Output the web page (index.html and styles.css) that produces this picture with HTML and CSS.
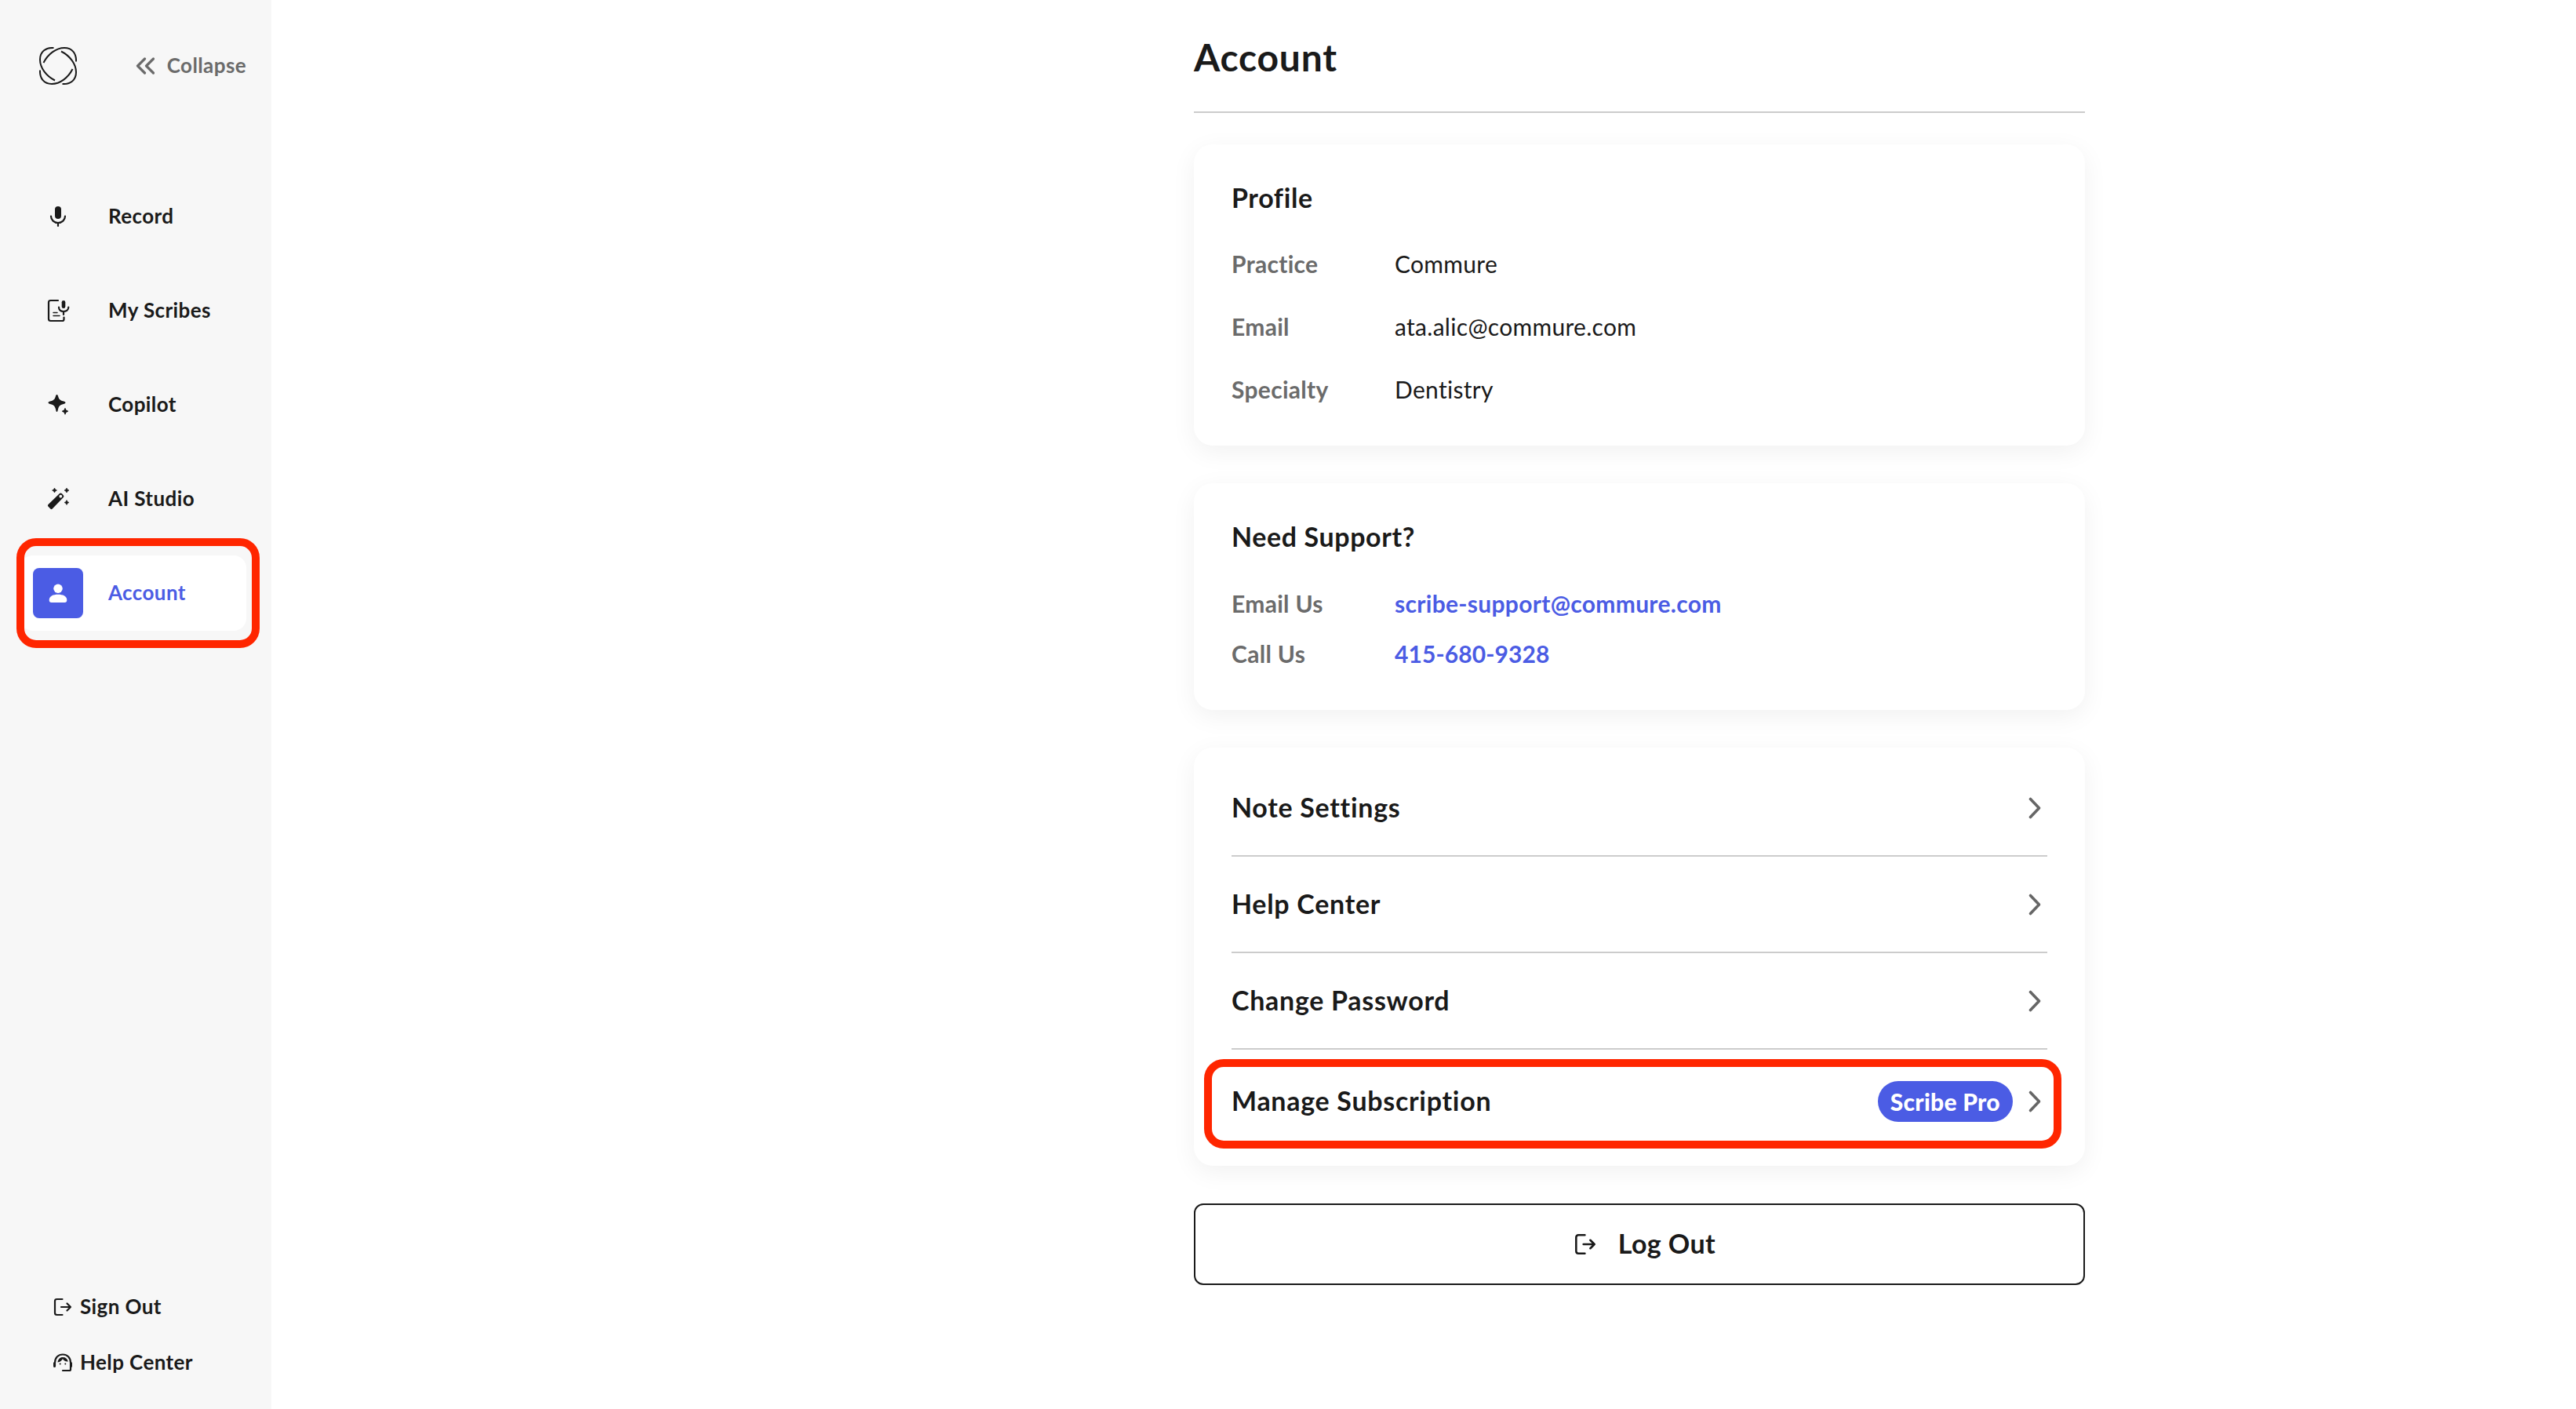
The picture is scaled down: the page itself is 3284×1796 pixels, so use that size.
FILE: index.html
```html
<!DOCTYPE html>
<html lang="en">
<head>
    <meta charset="UTF-8">
    <meta name="viewport" content="width=device-width, initial-scale=1.0">
    <title>Account</title>
    <link rel="stylesheet" href="styles.css">
</head>
<body>

    <aside class="sidebar">
        <div class="sidebar-top">
            <svg class="logo" viewBox="0 0 48 48">
                <path d="M18.500 1C8 .5 1 6 1 16c0 10.500 8 21 19 26.500"/>
                <path d="M18.500 1C8 .5 1 6 1 16c0 10.500 8 21 19 26.500" transform="rotate(90 24 24)"/>
                <path d="M18.500 1C8 .5 1 6 1 16c0 10.500 8 21 19 26.500" transform="rotate(180 24 24)"/>
                <path d="M18.500 1C8 .5 1 6 1 16c0 10.500 8 21 19 26.500" transform="rotate(270 24 24)"/>
            </svg>
            <button class="collapse">
                <svg viewBox="0 0 24 24"><path d="M11.500 3L2.500 12l9 9M22.500 3l-9 9 9 9"/></svg>
                <span>Collapse</span>
            </button>
        </div>

        <nav class="nav">
            <a class="nav-item" href="#">
                <span class="nav-icon">
                    <svg viewBox="0 0 32 32">
                        <rect x="12" y="3" width="8" height="16" rx="4" fill="currentColor"/>
                        <path class="line" d="M7 15.500c0 5 4 8.500 9 8.500s9-3.500 9-8.500M16 24v4"/>
                    </svg>
                </span>
                <span class="nav-label">Record</span>
            </a>
            <a class="nav-item" href="#">
                <span class="nav-icon">
                    <svg viewBox="0 0 32 32">
                        <path class="line" d="M16 3H6.500Q4 3 4 5.500v21Q4 29 6.500 29h15q2 0 2-2v-2.500"/>
                        <path class="line thin" d="M10 18.500h5M10 22.500h8"/>
                        <rect x="20.700" y="3" width="4.600" height="10" rx="2.300" fill="currentColor"/>
                        <path class="line" d="M17 11.500c0 3.500 2.500 5.500 6 5.500s6.300-2 6.300-5.500M23 17v4"/>
                    </svg>
                </span>
                <span class="nav-label">My Scribes</span>
            </a>
            <a class="nav-item" href="#">
                <span class="nav-icon">
                    <svg viewBox="0 0 32 32" fill="currentColor">
                        <path d="M14.500 3c1 0 1.300 1 1.600 2.200 1 3.500 2.400 5 5.900 6 1.600.4 3.500.8 3.500 2s-1.900 1.600-3.500 2c-3.500 1-4.900 2.500-5.900 6-.3 1.500-.8 3.800-1.600 3.800s-1.300-2.300-1.600-3.800c-1-3.500-2.400-5-5.900-6-1.600-.4-3.500-.8-3.500-2s1.900-1.600 3.500-2c3.500-1 4.900-2.500 5.900-6C13.200 4 13.500 3 14.500 3z"/>
                        <path d="M25 20c.8 0 1 2 1.400 2.500s2.600.8 2.600 1.700-2.200 1.200-2.600 1.700-.6 2.600-1.400 2.600-1-2.100-1.400-2.600-2.600-.8-2.600-1.700 2.200-1.200 2.600-1.700S24.200 20 25 20z"/>
                    </svg>
                </span>
                <span class="nav-label">Copilot</span>
            </a>
            <a class="nav-item" href="#">
                <span class="nav-icon">
                    <svg viewBox="0 0 32 32" fill="currentColor">
                        <path fill-rule="evenodd" d="M3.300 23.300L18 9q1.500-1 3 .3l2 2.200q1 1.300-.2 2.500L8.500 28.800q-1 .7-2 0l-3.300-3.500q-.7-1 .1-2zM19.300 10.700a1.900 1.900 0 1 0 .1 3.800 1.900 1.900 0 0 0-.1-3.800z"/>
                        <path d="M11.500 2q.7 2.500 3 3-2.300.6-3 3-.7-2.400-3-3 2.300-.5 3-3zM27 2q.7 2.500 3 3-2.300.6-3 3-.7-2.400-3-3 2.300-.5 3-3zM27 17.500q.7 2.500 3 3-2.300.6-3 3-.7-2.400-3-3 2.300-.5 3-3z" stroke="currentColor" stroke-width=".6"/>
                    </svg>
                </span>
                <span class="nav-label">AI Studio</span>
            </a>
            <a class="nav-item active" href="#">
                <span class="nav-icon">
                    <svg viewBox="0 0 32 32" fill="currentColor">
                        <circle cx="16" cy="10.300" r="5.700"/>
                        <path d="M4.700 25c0-5 4.500-7.300 11.300-7.300S27.300 20 27.300 25q0 3-3 3H7.700q-3 0-3-3z"/>
                    </svg>
                </span>
                <span class="nav-label">Account</span>
            </a>
        </nav>

        <div class="sidebar-bottom">
            <a class="bottom-link" href="#">
                <svg viewBox="0 0 24 24">
                    <path d="M11.500 2H4.500Q2 2 2 4.500v15Q2 22 4.500 22h7M10 12h12M17.500 7.500L22 12l-4.500 4.500"/>
                </svg>
                <span>Sign Out</span>
            </a>
            <a class="bottom-link" href="#">
                <svg viewBox="0 0 24 24">
                    <path d="M2 16v-4C2 5.500 6.500 1.500 12 1.500s10 4 10 10.500v8.500q0 1.500-1.500 1.500H12"/>
                    <path class="ear" d="M1.500 12.500v4M22.500 12.500v4"/>
                    <path class="hair" d="M5.500 11.500C6 7.500 8.500 5 12 5s6 2 6.800 5.500c-3 .5-5.600-1-6.800-3.500-1 2.300-3.500 4-6.500 4.500z"/>
                    <circle class="dot" cx="8.700" cy="13.500" r="1"/>
                    <circle class="dot" cx="15.300" cy="13.500" r="1"/>
                </svg>
                <span>Help Center</span>
            </a>
        </div>
    </aside>

    <main class="content">
        <h1>Account</h1>

        <section class="card profile">
            <h2>Profile</h2>
            <dl>
                <dt>Practice</dt>
                <dd>Commure</dd>
                <dt>Email</dt>
                <dd>ata.alic@commure.com</dd>
                <dt>Specialty</dt>
                <dd>Dentistry</dd>
            </dl>
        </section>

        <section class="card support">
            <h2>Need Support?</h2>
            <dl>
                <dt>Email Us</dt>
                <dd><a href="#">scribe-support@commure.com</a></dd>
                <dt>Call Us</dt>
                <dd><a class="phone" href="#">415-680-9328</a></dd>
            </dl>
        </section>

        <section class="card settings">
            <a class="setting" href="#">
                <span>Note Settings</span>
                <svg viewBox="0 0 32 32"><path d="M10.500 4.500L21.500 16l-11 11.500"/></svg>
            </a>
            <a class="setting" href="#">
                <span>Help Center</span>
                <svg viewBox="0 0 32 32"><path d="M10.500 4.500L21.500 16l-11 11.500"/></svg>
            </a>
            <a class="setting" href="#">
                <span>Change Password</span>
                <svg viewBox="0 0 32 32"><path d="M10.500 4.500L21.500 16l-11 11.500"/></svg>
            </a>
            <a class="setting highlighted" href="#">
                <span>Manage Subscription</span>
                <b class="plan">Scribe Pro</b>
                <svg viewBox="0 0 32 32"><path d="M10.500 4.500L21.500 16l-11 11.500"/></svg>
            </a>
        </section>

        <button class="logout">
            <svg viewBox="0 0 24 24">
                <path d="M11.500 2H4.500Q2 2 2 4.500v15Q2 22 4.500 22h7M10 12h12M17.500 7.500L22 12l-4.500 4.500"/>
            </svg>
            <span>Log Out</span>
        </button>
    </main>

</body>
</html>
```
FILE: styles.css
```css
* {
    box-sizing: border-box;
}

body {
    margin: 0;
    display: flex;
    height: 1796px;
    font-family: Lato, sans-serif;
    letter-spacing: 0.4px;
    color: #1a1a1a;
    background-color: #fff;
}

h1, h2, dl, dd {
    margin: 0;
}

a {
    color: inherit;
    text-decoration: none;
}

button {
    font-family: inherit;
    letter-spacing: inherit;
    color: inherit;
    background: none;
    border: none;
    padding: 0;
    cursor: pointer;
}

svg {
    flex-shrink: 0;
}

/* Sidebar */
.sidebar {
    width: 346px;
    background-color: #f7f7f7;
    display: flex;
    flex-direction: column;
    padding: 60px 32px 38px 26px;
    font-size: 26px;
    font-weight: 700;
    flex-shrink: 0;
}

.sidebar-top {
    display: flex;
    align-items: center;
    justify-content: space-between;
    height: 48px;
    padding-left: 24px;
}

.logo {
    width: 48px;
    height: 48px;
    fill: none;
    stroke: #1a1a1a;
    stroke-width: 2;
}

.collapse {
    display: flex;
    align-items: center;
    gap: 16px;
    font-size: 26px;
    font-weight: 700;
    color: #6b6b6b;
}

.collapse span {
    padding-bottom: 2px;
}

.collapse svg {
    width: 24px;
    height: 24px;
    fill: none;
    stroke: currentColor;
    stroke-width: 3.2;
    stroke-linecap: round;
    stroke-linejoin: round;
}

.nav {
    display: flex;
    flex-direction: column;
    gap: 24px;
    margin-top: 120px;
    flex: 1;
}

.nav-item {
    position: relative;
    display: flex;
    align-items: center;
    gap: 32px;
    height: 96px;
    padding-left: 16px;
    border-radius: 16px;
}

.nav-label {
    padding-bottom: 2px;
}

.nav-icon {
    display: flex;
    align-items: center;
    justify-content: center;
    width: 64px;
    height: 64px;
    border-radius: 8px;
}

.nav-icon svg {
    width: 32px;
    height: 32px;
}

.line {
    fill: none;
    stroke: currentColor;
    stroke-width: 2.2;
    stroke-linecap: round;
}

.line.thin {
    stroke-width: 1.5;
}

.nav-item.active {
    background-color: #fff;
    color: #4b5ce4;
}

.nav-item.active .nav-icon {
    background-color: #4b5ce4;
    color: #fff;
}

.nav-item.active::after,
.setting.highlighted::after {
    content: "";
    position: absolute;
    border: 10px solid #ff2600;
    border-radius: 25px;
}

.nav-item.active::after {
    top: -22px;
    right: -17px;
    bottom: -22px;
    left: -5px;
}

.sidebar-bottom {
    display: flex;
    flex-direction: column;
    gap: 31px;
    padding-left: 42px;
}

.bottom-link {
    display: flex;
    align-items: center;
    gap: 10px;
    height: 40px;
}

.bottom-link span {
    padding-bottom: 4px;
}

.bottom-link svg {
    margin-bottom: 2px;
}

.bottom-link svg,
.logout svg {
    width: 24px;
    height: 24px;
    fill: none;
    stroke: currentColor;
    stroke-width: 2.2;
    stroke-linecap: round;
    stroke-linejoin: round;
}

.bottom-link .ear {
    stroke-width: 3;
}

.bottom-link .hair,
.bottom-link .dot {
    fill: currentColor;
    stroke: none;
}

/* Account page */
.content {
    width: 1136px;
    margin-left: 1176px;
    display: flex;
    flex-direction: column;
    gap: 48px;
}

h1 {
    height: 144px;
    margin-bottom: -8px;
    border-bottom: 2px solid #ccc;
    font-size: 48px;
    line-height: 146px;
    letter-spacing: 0.8px;
}

.card {
    padding: 48px;
    background-color: #fff;
    border-radius: 24px;
    box-shadow: 0 8px 32px rgba(0, 0, 0, 0.06);
}

h2 {
    font-size: 34px;
    line-height: 40px;
    letter-spacing: 0.6px;
}

dl {
    display: grid;
    grid-template-columns: 208px 1fr;
    row-gap: 40px;
    font-size: 30px;
    line-height: 40px;
    letter-spacing: 0.3px;
}

dt {
    color: #6b6b6b;
    font-weight: 700;
}

dd a {
    color: #4b5ce4;
    font-weight: 700;
}

.phone {
    letter-spacing: 0.1px;
}

.profile {
    height: 384px;
}

.profile dl {
    margin-top: 44px;
}

.support {
    height: 289px;
}

.support dl {
    margin-top: 45px;
    row-gap: 24px;
}

.settings {
    padding-top: 16px;
    padding-bottom: 16px;
}

.setting {
    display: flex;
    align-items: center;
    gap: 12px;
    height: 123px;
    border-bottom: 2px solid #ccc;
    font-size: 34px;
    font-weight: 700;
    letter-spacing: 0.7px;
}

.setting span {
    flex: 1;
    padding-bottom: 2px;
}

.setting svg {
    width: 32px;
    height: 32px;
    fill: none;
    stroke: #666;
    stroke-width: 3.6;
    stroke-linecap: round;
    stroke-linejoin: round;
}

.setting.highlighted {
    position: relative;
    height: 132px;
    border-bottom: none;
}

.setting.highlighted span {
    padding-bottom: 4px;
}

.setting.highlighted::after {
    top: 12px;
    right: -18px;
    bottom: 6px;
    left: -35px;
}

.plan {
    height: 52px;
    padding: 0 16px;
    border-radius: 26px;
    background-color: #4b5ce4;
    color: #fff;
    font-size: 30px;
    line-height: 53px;
    letter-spacing: 0.3px;
}

.logout {
    display: flex;
    align-items: center;
    justify-content: center;
    gap: 28px;
    height: 104px;
    padding-left: 14px;
    border: 2px solid #1a1a1a;
    border-radius: 12px;
    font-size: 34px;
    font-weight: 700;
}

.logout span {
    padding-bottom: 4px;
}

.logout svg {
    width: 28px;
    height: 28px;
}
```
